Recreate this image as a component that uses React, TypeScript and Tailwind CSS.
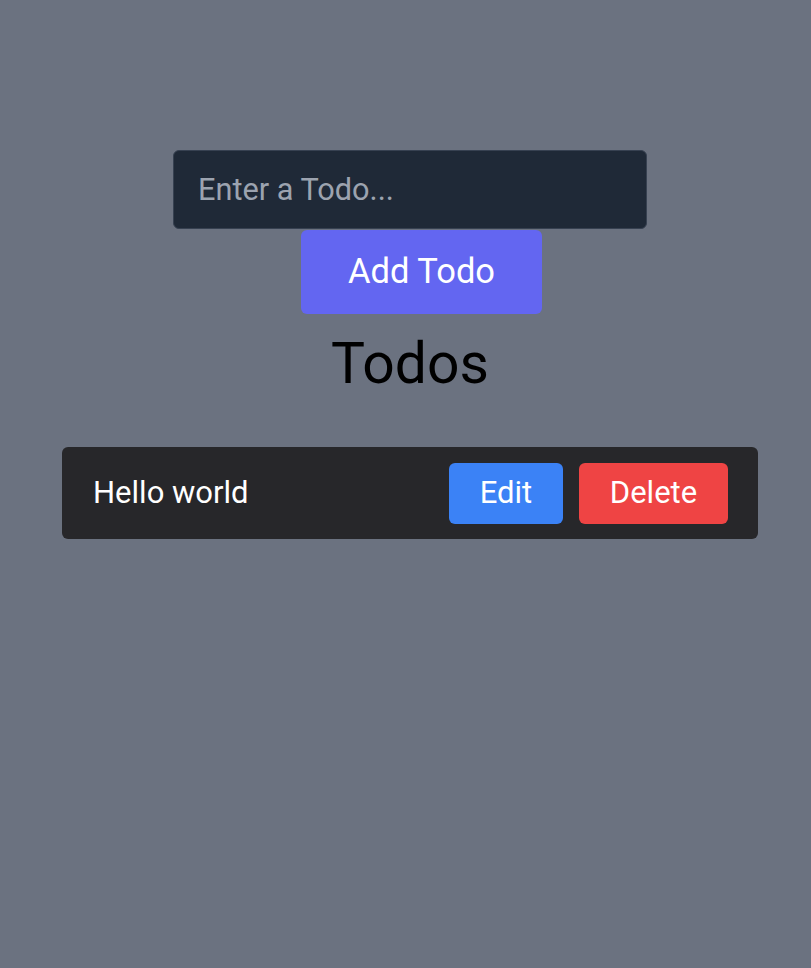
import React from "react";

export default function App() {
  return (
    <div
      className="min-h-[968px] w-full bg-[#6b7280]"
      style={{ fontFamily: "Roboto, 'Liberation Sans', sans-serif" }}
    >
      <div className="ml-[62px] flex w-[696px] flex-col items-center pt-[150px]">
        <input
          placeholder="Enter a Todo..."
          className="h-[79px] w-[474px] rounded-[6px] border border-[#374151] bg-[#1f2937] px-[24px] text-[30.7px] text-white outline-none placeholder:text-[#9ca3af]"
        />
        <button className="ml-[23px] mt-px flex h-[84px] w-[241px] items-center justify-center rounded-[6px] bg-[#6366f1] text-[34.5px] text-white">
          Add Todo
        </button>
        <h1 className="mt-[16px] text-[57px] leading-[68px] text-black">Todos</h1>
        <div className="mt-[49px] flex h-[92px] w-[696px] items-center rounded-[6px] bg-[#27272a] pl-[31px] pr-[30px]">
          <span className="flex-1 text-[31px] text-white">Hello world</span>
          <button className="flex h-[61px] w-[114px] items-center justify-center rounded-[6px] bg-[#3b82f6] text-[31px] text-white">
            Edit
          </button>
          <button className="ml-[16px] flex h-[61px] w-[149px] items-center justify-center rounded-[6px] bg-[#ef4444] text-[31px] text-white">
            Delete
          </button>
        </div>
      </div>
    </div>
  );
}
